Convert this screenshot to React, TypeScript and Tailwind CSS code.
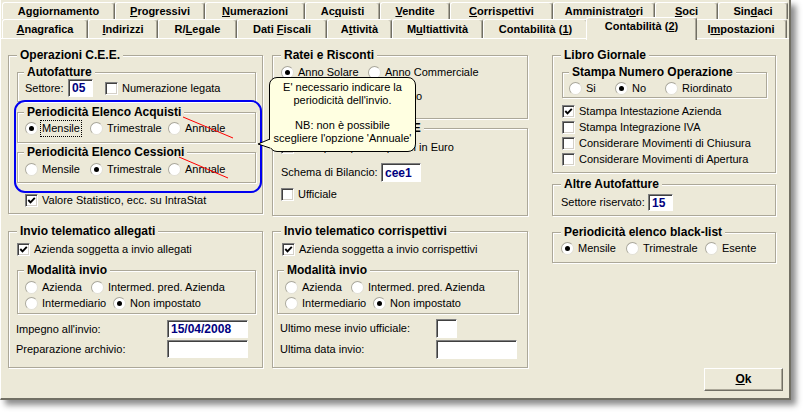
import React from "react";

type Tab = { w: string; label: React.ReactNode; active?: boolean };

const ROW1: Tab[] = [
  { w: "w-[113px]", label: <>Aggiornamento</> },
  { w: "w-[90px]", label: <><u>P</u>rogressivi</> },
  { w: "w-[100px]", label: <><u>N</u>umerazioni</> },
  { w: "w-[75px]", label: <>Ac<u>q</u>uisti</> },
  { w: "w-[70px]", label: <><u>V</u>endite</> },
  { w: "w-[103px]", label: <><u>C</u>orrispettivi</> },
  { w: "w-[102px]", label: <>Amministrat<u>o</u>ri</> },
  { w: "w-[63px]", label: <><u>S</u>oci</> },
  { w: "w-[70px]", label: <>Sin<u>d</u>aci</> },
];

const ROW2: Tab[] = [
  { w: "w-[86px]", label: <><u>A</u>nagrafica</> },
  { w: "w-[70px]", label: <><u>I</u>ndirizzi</> },
  { w: "w-[79px]", label: <>R/<u>L</u>egale</> },
  { w: "w-[90px]", label: <>Dati <u>F</u>iscali</> },
  { w: "w-[65px]", label: <>A<u>t</u>tività</> },
  { w: "w-[91px]", label: <>M<u>u</u>ltiattività</> },
  { w: "w-[105px]", label: <>Contabilità (<u>1</u>)</> },
  { w: "w-[111px]", label: <>Contabilità (<u>2</u>)</>, active: true },
  { w: "w-[92px]", label: <>I<u>m</u>postazioni</> },
];

function TabRow({ tabs, h }: { tabs: Tab[]; h: string }) {
  return (
    <div className={`flex items-start ${h}`}>
      {tabs.map((t, i) =>
        t.active ? (
          <div
            key={i}
            className={`${t.w} relative z-10 -mx-[2px] -mt-[2px] h-[23px] shrink-0 flex items-center justify-center pb-[6px] bg-[#ece9d8] border-t border-l border-white border-r border-r-[#716f64] rounded-t-[3px] shadow-[inset_-1px_0_0_#aca899] text-[11px] font-bold whitespace-nowrap`}
          >
            <span>{t.label}</span>
          </div>
        ) : (
          <div
            key={i}
            className={`${t.w} h-full shrink-0 flex items-center justify-center pt-[1px] border-t border-l border-white border-r border-r-[#716f64] rounded-t-[3px] shadow-[inset_-1px_0_0_#aca899] text-[11px] font-bold whitespace-nowrap`}
          >
            <span>{t.label}</span>
          </div>
        )
      )}
    </div>
  );
}

function Group({
  title,
  inner,
  className = "",
  children,
}: {
  title: string;
  inner?: boolean;
  className?: string;
  children?: React.ReactNode;
}) {
  return (
    <div className={`relative shrink-0 border border-[#aca899] shadow-[inset_1px_1px_0_#fff,1px_1px_0_#fff] ${className}`}>
      <span
        className={`absolute -top-[8px] ${inner ? "left-[6px]" : "left-[8px]"} bg-[#ece9d8] px-[3px] text-[12px] font-bold leading-[14px] whitespace-nowrap`}
      >
        {title}
      </span>
      {children}
    </div>
  );
}

function Radio({ label, on, focus, w = "" }: { label: string; on?: boolean; focus?: boolean; w?: string }) {
  return (
    <div className={`flex items-center h-[13px] shrink-0 ${w}`}>
      <span className="w-[13px] h-[13px] shrink-0 rounded-full bg-white border border-[#e2e0d6] border-t-[#a9a79b] border-l-[#a9a79b] flex items-center justify-center">
        {on && <span className="w-[5px] h-[5px] rounded-full bg-black" />}
      </span>
      <span
        className={`ml-[4px] whitespace-nowrap ${focus ? "outline-1 outline-dotted outline-black outline-offset-[1px]" : ""}`}
      >
        {label}
      </span>
    </div>
  );
}

function Check({ label, checked, className = "" }: { label: string; checked?: boolean; className?: string }) {
  return (
    <div className={`flex items-center h-[13px] ${className}`}>
      <span className="w-[13px] h-[13px] shrink-0 bg-white border border-t-[#808080] border-l-[#808080] border-r-white border-b-white shadow-[inset_1px_1px_0_#404040,inset_-1px_-1px_0_#d4d0c8] flex items-center justify-center">
        {checked && (
          <svg width="9" height="9" viewBox="0 0 9 9">
            <polyline points="1.3,4 3.5,6.3 7.8,1.8" fill="none" stroke="#000" strokeWidth="1.9" />
          </svg>
        )}
      </span>
      <span className="ml-[4px] whitespace-nowrap">{label}</span>
    </div>
  );
}

function Field({ value, className = "" }: { value?: string; className?: string }) {
  return (
    <div
      className={`shrink-0 flex items-center pl-[3px] bg-white border border-t-[#808080] border-l-[#808080] border-r-white border-b-white shadow-[inset_1px_1px_0_#404040] text-[12px] font-bold leading-none text-[#000080] ${className}`}
    >
      {value}
    </div>
  );
}

export default function App() {
  return (
    <div className="min-h-screen bg-white font-['Liberation_Sans',Arial,sans-serif] text-[11px] leading-[13px] text-black">
      <div className="relative w-[791px] h-[400px] bg-[#ece9d8] border-l border-white border-r-2 border-b-2 border-r-[#716f64] border-b-[#716f64] shadow-[5px_5px_6px_rgba(0,0,0,0.45)]">
        {/* tabs */}
        <div className="pl-[1px] pt-[2px]">
          <TabRow tabs={ROW1} h="h-[17px]" />
          <TabRow tabs={ROW2} h="h-[19px]" />
        </div>

        {/* page */}
        <div className="flex border-t border-white pl-[7px] pt-[16px]">
          {/* column 1 */}
          <div className="flex flex-col w-[255px] mr-[9px] shrink-0">
            <Group title="Operazioni C.E.E." className="h-[159px]">
              <Group inner title="Autofatture" className="ml-[8px] mt-[16px] w-[239px] h-[30px]">
                <div className="flex items-center h-[18px] mt-[6px] pl-[7px]">
                  <span className="w-[43px]">Settore:</span>
                  <Field value="05" className="w-[25px] h-[18px]" />
                  <Check label="Numerazione legata" className="ml-[12px]" />
                </div>
              </Group>
              <Group inner title="Periodicità Elenco Acquisti" className="ml-[8px] mt-[10px] w-[239px] h-[31px]">
                <div className="flex items-center h-[17px] mt-[7px] pl-[7px]">
                  <Radio label="Mensile" on focus w="w-[65px]" />
                  <Radio label="Trimestrale" w="w-[78px]" />
                  <Radio label="Annuale" />
                </div>
              </Group>
              <Group inner title="Periodicità Elenco Cessioni" className="ml-[8px] mt-[9px] w-[239px] h-[31px]">
                <div className="flex items-center h-[17px] mt-[8px] pl-[7px]">
                  <Radio label="Mensile" w="w-[65px]" />
                  <Radio label="Trimestrale" on w="w-[78px]" />
                  <Radio label="Annuale" />
                </div>
              </Group>
              <Check label="Valore Statistico, ecc. su IntraStat" checked className="mt-[11px] ml-[16px]" />
            </Group>

            <Group title="Invio telematico allegati" className="mt-[17px] h-[137px]">
              <Check label="Azienda soggetta a invio allegati" checked className="mt-[11px] ml-[8px]" />
              <Group inner title="Modalità invio" className="ml-[8px] mt-[14px] w-[239px] h-[44px]">
                <div className="flex items-center h-[13px] mt-[10px] pl-[7px]">
                  <Radio label="Azienda" w="w-[66px]" />
                  <Radio label="Intermed. pred. Azienda" />
                </div>
                <div className="flex items-center h-[13px] mt-[3px] pl-[7px]">
                  <Radio label="Intermediario" w="w-[88px]" />
                  <Radio label="Non impostato" on />
                </div>
              </Group>
              <div className="flex items-center h-[18px] mt-[6px] pl-[7px]">
                <span className="w-[151px]">Impegno all'invio:</span>
                <Field value="15/04/2008" className="w-[81px] h-[18px]" />
              </div>
              <div className="flex items-center h-[18px] mt-[2px] pl-[7px]">
                <span className="w-[151px]">Preparazione archivio:</span>
                <Field className="w-[81px] h-[18px]" />
              </div>
            </Group>
          </div>

          {/* column 2 */}
          <div className="flex flex-col w-[256px] mr-[24px] shrink-0">
            <Group title="Ratei e Risconti" className="h-[64px]">
              <div className="flex items-center h-[13px] mt-[10px] pl-[8px]">
                <Radio label="Anno Solare" on w="w-[87px]" />
                <Radio label="Anno Commerciale" />
              </div>
              <Check label="Calcolo giornaliero esatto" className="mt-[11px] ml-[8px]" />
            </Group>

            <Group title="Bilancio in formato CEE" className="mt-[9px] h-[88px]">
              <Check label="Stampa importi espressi in Euro" className="mt-[12px] ml-[8px]" />
              <div className="flex items-center h-[19px] mt-[9px] pl-[8px]">
                <span className="w-[100px]">Schema di Bilancio:</span>
                <Field value="cee1" className="w-[40px] h-[19px]" />
              </div>
              <Check label="Ufficiale" className="mt-[6px] ml-[8px]" />
            </Group>

            <Group title="Invio telematico corrispettivi" className="mt-[15px] h-[137px]">
              <Check label="Azienda soggetta a invio corrispettivi" checked className="mt-[11px] ml-[9px]" />
              <Group inner title="Modalità invio" className="ml-[4px] mt-[14px] w-[242px] h-[44px]">
                <div className="flex items-center h-[13px] mt-[10px] pl-[7px]">
                  <Radio label="Azienda" w="w-[66px]" />
                  <Radio label="Intermed. pred. Azienda" />
                </div>
                <div className="flex items-center h-[13px] mt-[3px] pl-[7px]">
                  <Radio label="Intermediario" w="w-[88px]" />
                  <Radio label="Non impostato" on />
                </div>
              </Group>
              <div className="flex items-center h-[19px] mt-[5px] pl-[7px]">
                <span className="w-[156px]">Ultimo mese invio ufficiale:</span>
                <Field className="w-[21px] h-[19px]" />
              </div>
              <div className="flex items-center h-[19px] mt-[2px] pl-[7px]">
                <span className="w-[156px]">Ultima data invio:</span>
                <Field className="w-[81px] h-[19px]" />
              </div>
            </Group>
          </div>

          {/* column 3 */}
          <div className="flex flex-col w-[224px] shrink-0">
            <Group title="Libro Giornale" className="h-[118px]">
              <Group inner title="Stampa Numero Operazione" className="ml-[9px] mt-[16px] w-[205px] h-[26px]">
                <div className="flex items-center h-[13px] mt-[9px] pl-[6px]">
                  <Radio label="Si" w="w-[46px]" />
                  <Radio label="No" on w="w-[50px]" />
                  <Radio label="Riordinato" />
                </div>
              </Group>
              <div className="flex flex-col gap-[3px] mt-[7px] pl-[9px]">
                <Check label="Stampa Intestazione Azienda" checked />
                <Check label="Stampa Integrazione IVA" />
                <Check label="Considerare Movimenti di Chiusura" />
                <Check label="Considerare Movimenti di Apertura" />
              </div>
            </Group>

            <Group title="Altre Autofatture" className="mt-[11px] h-[32px]">
              <div className="flex items-center h-[17px] mt-[9px] pl-[8px]">
                <span className="w-[87px]">Settore riservato:</span>
                <Field value="15" className="w-[25px] h-[17px]" />
              </div>
            </Group>

            <Group title="Periodicità elenco black-list" className="mt-[16px] h-[31px]">
              <div className="flex items-center h-[13px] mt-[9px] pl-[8px]">
                <Radio label="Mensile" on w="w-[65px]" />
                <Radio label="Trimestrale" w="w-[79px]" />
                <Radio label="Esente" />
              </div>
            </Group>

            <button className="self-start shrink-0 mt-[105px] ml-[152px] w-[79px] h-[23px] bg-[#ece9d8] border border-t-white border-l-white border-r-[#716f64] border-b-[#716f64] shadow-[inset_-1px_-1px_0_#aca899] text-[12px] font-bold">
              <u>O</u>k
            </button>
          </div>
        </div>

        {/* annotations drawn over the dialog */}
        <div className="absolute left-[13px] top-[100px] w-[248px] h-[93px] rounded-[11px] border-2 border-[#0000f0] pointer-events-none" />
        <svg className="absolute left-0 top-0 pointer-events-none" width="791" height="400">
          <line x1="182" y1="117" x2="232" y2="138" stroke="#ff0000" strokeWidth="1" />
          <line x1="178" y1="157" x2="227" y2="178" stroke="#ff0000" strokeWidth="1" />
        </svg>

        <div className="absolute left-[268px] top-[77px] w-[147px] h-[75px] rounded-[8px] border border-black bg-[#ffffe1] pt-[3px] text-center leading-[13px] whitespace-nowrap">
          <div>E' necessario indicare la</div>
          <div>periodicità dell'invio.</div>
          <div className="h-[12px]" />
          <div>NB: non è possibile</div>
          <div>scegliere l'opzione 'Annuale'</div>
        </div>
        <svg className="absolute left-[256px] top-[138px]" width="14" height="12" viewBox="0 0 14 12">
          <polygon points="14,1 1,6 14,10" fill="#ffffe1" />
          <polyline points="13,1 1,6 13,10" fill="none" stroke="#000" strokeWidth="1" />
        </svg>
      </div>
    </div>
  );
}
